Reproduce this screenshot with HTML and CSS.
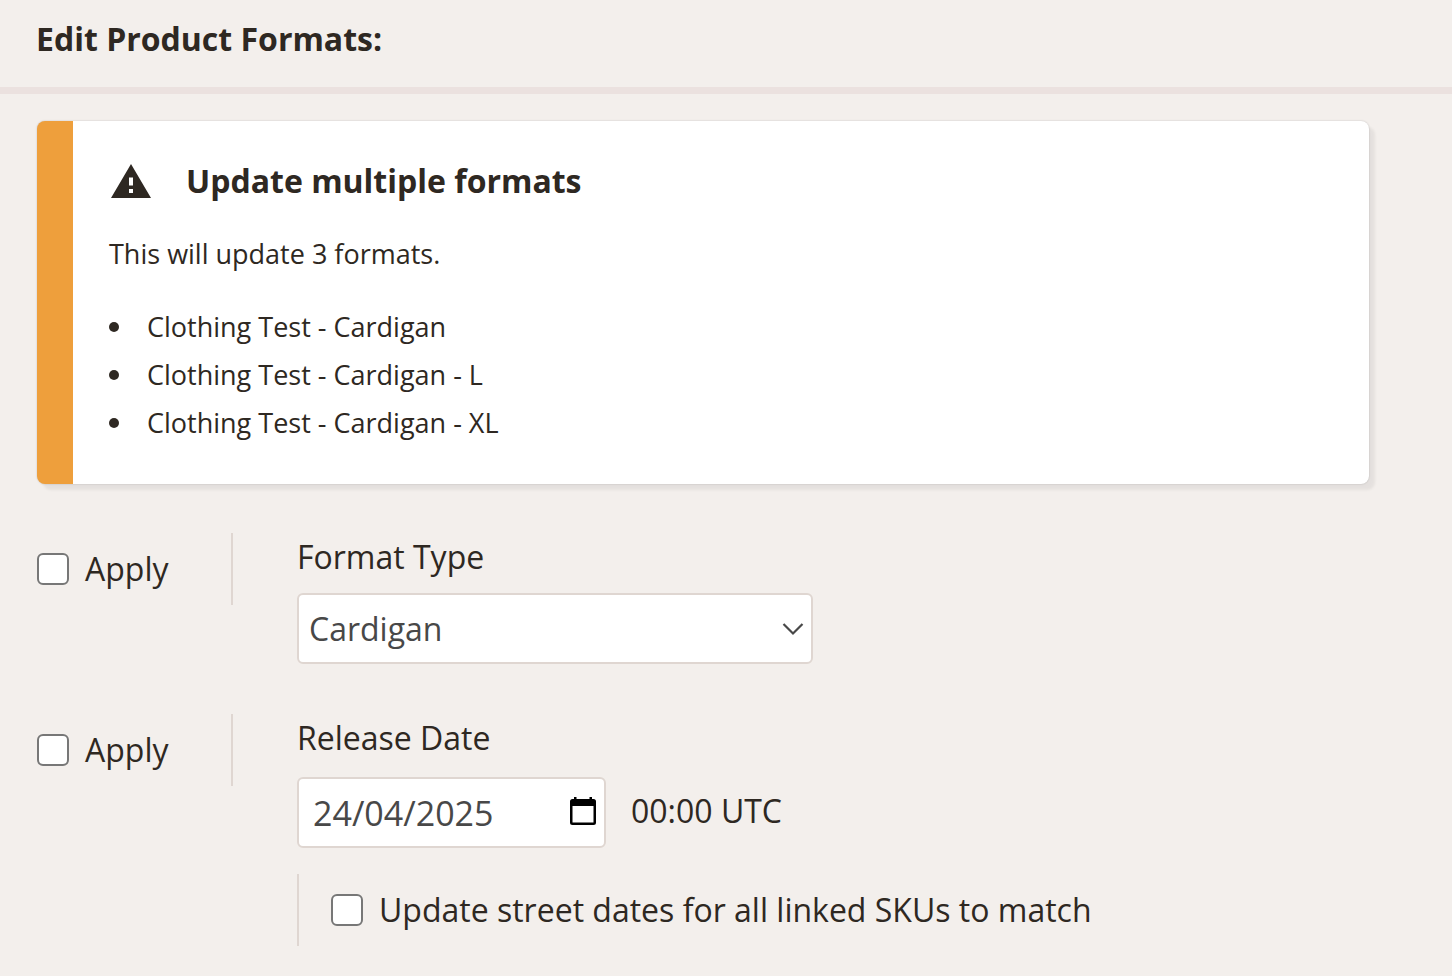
FILE: index.html
```html
<!DOCTYPE html>
<html lang="en">
<head>
    <meta charset="UTF-8">
    <meta name="viewport" content="width=device-width, initial-scale=1.0">
    <title>Edit Product Formats</title>
    <link rel="stylesheet" href="styles.css">
</head>
<body>
    <header class="page-header">
        <h1>Edit Product Formats:</h1>
    </header>

    <main class="content">
        <section class="alert">
            <div class="alert-title">
                <svg class="alert-icon" viewBox="0 0 40 34" aria-hidden="true">
                    <path fill="currentColor" fill-rule="evenodd" d="M20 0L40 34H0ZM18 13.500V21.500H22V13.500ZM18 25V29H22V25Z"/>
                </svg>
                <h2>Update multiple formats</h2>
            </div>
            <p>This will update 3 formats.</p>
            <ul>
                <li>Clothing Test - Cardigan</li>
                <li>Clothing Test - Cardigan - L</li>
                <li>Clothing Test - Cardigan - XL</li>
            </ul>
        </section>

        <form class="format-form">
            <div class="form-row">
                <div class="apply">
                    <input type="checkbox" id="applyFormat">
                    <label for="applyFormat">Apply</label>
                </div>
                <div class="field">
                    <label for="formatType">Format Type</label>
                    <div class="select-box">
                        <select id="formatType">
                            <option>Cardigan</option>
                        </select>
                        <svg class="chevron" viewBox="0 0 22 14" aria-hidden="true">
                            <path d="M1.500 2L11 11.500L20.500 2" fill="none" stroke="currentColor" stroke-width="2.200"/>
                        </svg>
                    </div>
                </div>
            </div>

            <div class="form-row">
                <div class="apply">
                    <input type="checkbox" id="applyDate">
                    <label for="applyDate">Apply</label>
                </div>
                <div class="field">
                    <label for="releaseDate">Release Date</label>
                    <div class="date-line">
                        <div class="date-box">
                            <input type="text" id="releaseDate" value="24/04/2025">
                            <button type="button" class="date-button" aria-label="Open calendar">
                                <svg viewBox="0 0 26 28" aria-hidden="true">
                                    <path fill="currentColor" fill-rule="evenodd" d="M4 0H6.500V2H19.500V0H22V2H23.500Q26 2 26 4.500V25.500Q26 28 23.500 28H2.500Q0 28 0 25.500V4.500Q0 2 2.500 2H4ZM2.500 9V25.500H23.500V9Z"/>
                                </svg>
                            </button>
                        </div>
                        <span class="date-time">00:00 UTC</span>
                    </div>
                    <div class="linked">
                        <input type="checkbox" id="linkedSkus">
                        <label for="linkedSkus">Update street dates for all linked SKUs to match</label>
                    </div>
                </div>
            </div>
        </form>
    </main>
</body>
</html>
```
FILE: styles.css
```css
* {
    box-sizing: border-box;
}
body {
    margin: 0;
    background-color: #f3efec;
    color: #2e2822;
    font-family: "Open Sans", sans-serif;
    font-size: 32px;
    line-height: 48px;
}
h1, h2 {
    margin: 0;
    font-size: 32px;
    font-weight: 700;
}
.page-header {
    padding: 15px 36px 24px;
    border-bottom: 7px solid #ebe1df;
}
.content {
    padding: 27px 83px 30px 37px;
}

/* Warning box */
.alert {
    padding: 36px 36px 37px;
    border-left: 36px solid #ee9f3c;
    border-radius: 8px;
    background-color: white;
    box-shadow: 0 0 2px rgba(0, 0, 0, 0.2), 6px 6px 3px rgba(0, 0, 0, 0.06);
}
.alert-title {
    display: flex;
    align-items: center;
    gap: 35px;
    padding-left: 2px;
}
.alert-icon {
    width: 40px;
    height: 34px;
}
.alert p {
    margin: 25px 0;
    font-size: 27px;
}
.alert ul {
    margin: 0;
    padding: 0;
    list-style: none;
    font-size: 27px;
}
.alert li {
    display: flex;
    align-items: center;
    gap: 28px;
}
.alert li::before {
    content: "";
    width: 10px;
    height: 10px;
    border-radius: 50%;
    background-color: #2e2822;
}

/* Form */
.format-form {
    display: flex;
    flex-direction: column;
    gap: 50px;
    margin-top: 49px;
}
.form-row {
    display: grid;
    grid-template-columns: 196px 1fr;
    column-gap: 64px;
    align-items: start;
}
.apply, .linked {
    display: flex;
    align-items: center;
    gap: 16px;
    height: 72px;
}
.apply {
    border-right: 2px solid #dfd6d1;
}
.linked {
    margin-top: 26px;
    padding-left: 32px;
    border-left: 2px solid #dfd6d1;
}
input[type="checkbox"] {
    appearance: none;
    width: 32px;
    height: 32px;
    margin: 0;
    border: 2px solid #777;
    border-radius: 6px;
    background-color: white;
}
.field > label {
    display: block;
    margin-bottom: 12px;
}
.select-box, .date-box {
    position: relative;
}
.select-box {
    max-width: 516px;
}
select, .date-box input {
    display: block;
    width: 100%;
    height: 71px;
    border: 2px solid #dfd6d1;
    border-radius: 6px;
    background-color: white;
    color: #484848;
    font-family: inherit;
    font-size: 32px;
}
select {
    appearance: none;
    padding: 0 48px 0 10px;
}
.chevron {
    position: absolute;
    top: 29px;
    right: 9px;
    width: 22px;
    height: 14px;
    color: #484848;
    pointer-events: none;
}
.date-line {
    display: flex;
    align-items: center;
    gap: 25px;
    margin-top: 15px;
}
.date-box {
    width: 309px;
}
.date-box input {
    padding: 0 48px 0 14px;
    font-size: 34px;
}
.date-time {
    padding-bottom: 4px;
}
.date-button {
    position: absolute;
    top: 20px;
    right: 10px;
    width: 26px;
    height: 28px;
    padding: 0;
    border: none;
    background: none;
    color: black;
}
.date-button svg {
    display: block;
}
```
